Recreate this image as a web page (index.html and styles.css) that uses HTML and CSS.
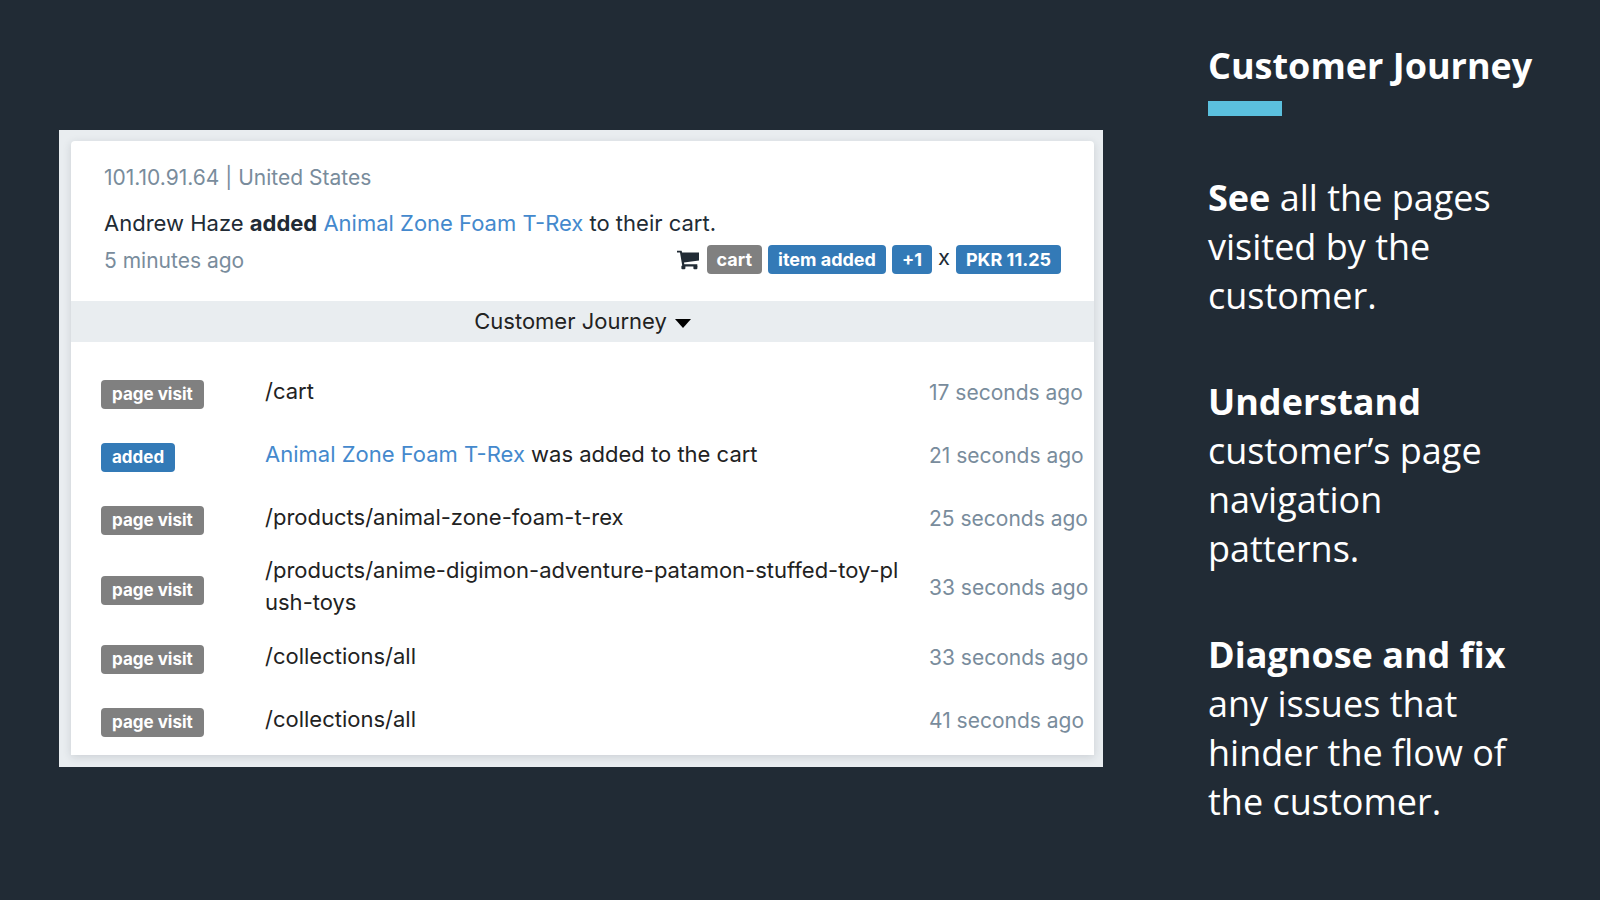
FILE: index.html
```html
<!DOCTYPE html>
<html lang="en">
<head>
    <meta charset="utf-8">
    <title>Customer Journey</title>
    <link rel="stylesheet" href="styles.css">
</head>
<body>
    <main class="slide">
        <div class="frame">
            <section class="card">
                <header class="event">
                    <p class="muted">101.10.91.64 | United States</p>
                    <p class="summary">Andrew Haze <strong>added</strong> <a href="#">Animal Zone Foam T-Rex</a> to their cart.</p>
                    <div class="meta">
                        <span class="muted">5 minutes ago</span>
                        <div class="labels">
                            <svg class="cart-icon" viewBox="0 0 22 20" aria-hidden="true">
                                <path d="M0 .8h4.6l.5 1.6H22v8.2L7 12.4l.3 1.8h13v2.2H5.4L3 2.6H0z"/>
                                <rect x="4.4" y="15.4" width="4" height="3.8" rx="1"/>
                                <rect x="16.4" y="15.4" width="4" height="3.8" rx="1"/>
                            </svg>
                            <span class="label">cart</span>
                            <span class="label blue">item added</span>
                            <span class="label blue">+1</span>
                            <span class="times">x</span>
                            <span class="label blue">PKR 11.25</span>
                        </div>
                    </div>
                </header>
                <button class="toggle" type="button">Customer Journey <span class="caret"></span></button>
                <table class="journey">
                    <tr>
                        <td class="kind"><span class="label">page visit</span></td>
                        <td class="path">/cart</td>
                        <td class="time">17 seconds ago</td>
                    </tr>
                    <tr>
                        <td class="kind"><span class="label blue">added</span></td>
                        <td class="path"><a href="#">Animal Zone Foam T-Rex</a> was added to the cart</td>
                        <td class="time">21 seconds ago</td>
                    </tr>
                    <tr>
                        <td class="kind"><span class="label">page visit</span></td>
                        <td class="path">/products/animal-zone-foam-t-rex</td>
                        <td class="time">25 seconds ago</td>
                    </tr>
                    <tr>
                        <td class="kind"><span class="label">page visit</span></td>
                        <td class="path">/products/anime-digimon-adventure-patamon-stuffed-toy-plush-toys</td>
                        <td class="time">33 seconds ago</td>
                    </tr>
                    <tr>
                        <td class="kind"><span class="label">page visit</span></td>
                        <td class="path">/collections/all</td>
                        <td class="time">33 seconds ago</td>
                    </tr>
                    <tr>
                        <td class="kind"><span class="label">page visit</span></td>
                        <td class="path">/collections/all</td>
                        <td class="time">41 seconds ago</td>
                    </tr>
                </table>
            </section>
        </div>
        <aside class="notes">
            <h1>Customer Journey</h1>
            <p><strong>See</strong> all the pages visited by the customer.</p>
            <p><strong>Understand</strong> customer’s page navigation patterns.</p>
            <p><strong>Diagnose and fix</strong> any issues that hinder the flow of the customer.</p>
        </aside>
    </main>
</body>
</html>
```

FILE: styles.css
```css
* {
    box-sizing: border-box;
}
body {
    margin: 0;
    background-color: #212b35;
    font-family: Inter, "Liberation Sans", sans-serif;
    font-size: 22px;
    line-height: 32px;
    color: #212b35;
}
p, h1 {
    margin: 0;
}
a {
    color: #4489cd;
    text-decoration: none;
}
.slide {
    display: flex;
    min-height: 100vh;
    padding: 0 66px 3px 59px;
    gap: 105px;
}

/* event card */
.frame {
    flex: 1;
    align-self: center;
    padding: 11px 9px 12px 12px;
    background-color: #e9edf0;
}
.card {
    background-color: #fff;
    border-radius: 4px 4px 0 0;
    box-shadow: 0 2px 8px rgba(33, 43, 53, 0.15);
}
.event {
    padding: 21px 33px 24px;
}
.muted, .time {
    color: #798c9c;
    font-size: 21px;
}
.summary {
    margin-top: 13px;
}
.meta {
    display: flex;
    justify-content: space-between;
    align-items: flex-start;
    margin-top: 6px;
}
.labels {
    display: flex;
    align-items: center;
    gap: 6px;
}
.cart-icon {
    width: 22px;
    height: 20px;
    margin-right: 2px;
    fill: #212b35;
}
.times {
    line-height: 24px;
    padding-bottom: 5px;
}
.label {
    display: inline-block;
    padding: 0 11px;
    border-radius: 4px;
    background-color: #808080;
    color: #fff;
    font-size: 17px;
    font-weight: 700;
    line-height: 29px;
    white-space: nowrap;
}
.label.blue {
    background-color: #337ab7;
}
.labels .label {
    padding: 0 10px;
    font-size: 18px;
}
.toggle {
    display: flex;
    width: 100%;
    height: 41px;
    padding: 0 0 2px;
    border: 0;
    align-items: center;
    justify-content: center;
    gap: 8px;
    background-color: #e9edf0;
    color: #222;
    font: inherit;
    cursor: pointer;
}
.caret {
    margin-top: 5px;
    border: 8px solid transparent;
    border-top: 9px solid #000;
    border-bottom: 0;
}
.journey {
    width: 100%;
    border-spacing: 0;
    padding: 19px 0 3px;
    table-layout: fixed;
}
.journey td {
    height: 63px;
    padding: 6px 0;
    vertical-align: middle;
}
.journey .kind {
    width: 194px;
    padding-left: 30px;
}
.journey .path {
    padding: 4px 24px 8px 0;
    color: #222;
    word-break: break-all;
}
.journey .time {
    width: 165px;
    white-space: nowrap;
}

/* text column */
.notes {
    width: 326px;
    padding: 41px 0;
    color: #fff;
    font-family: "Open Sans", sans-serif;
    font-size: 36px;
    line-height: 49px;
}
.notes h1 {
    font-size: 36px;
    white-space: nowrap;
}
.notes h1::after {
    content: "";
    display: block;
    width: 74px;
    height: 15px;
    margin: 11px 0 57px;
    background-color: #5bc0de;
}
.notes p + p {
    margin-top: 57px;
}
```
